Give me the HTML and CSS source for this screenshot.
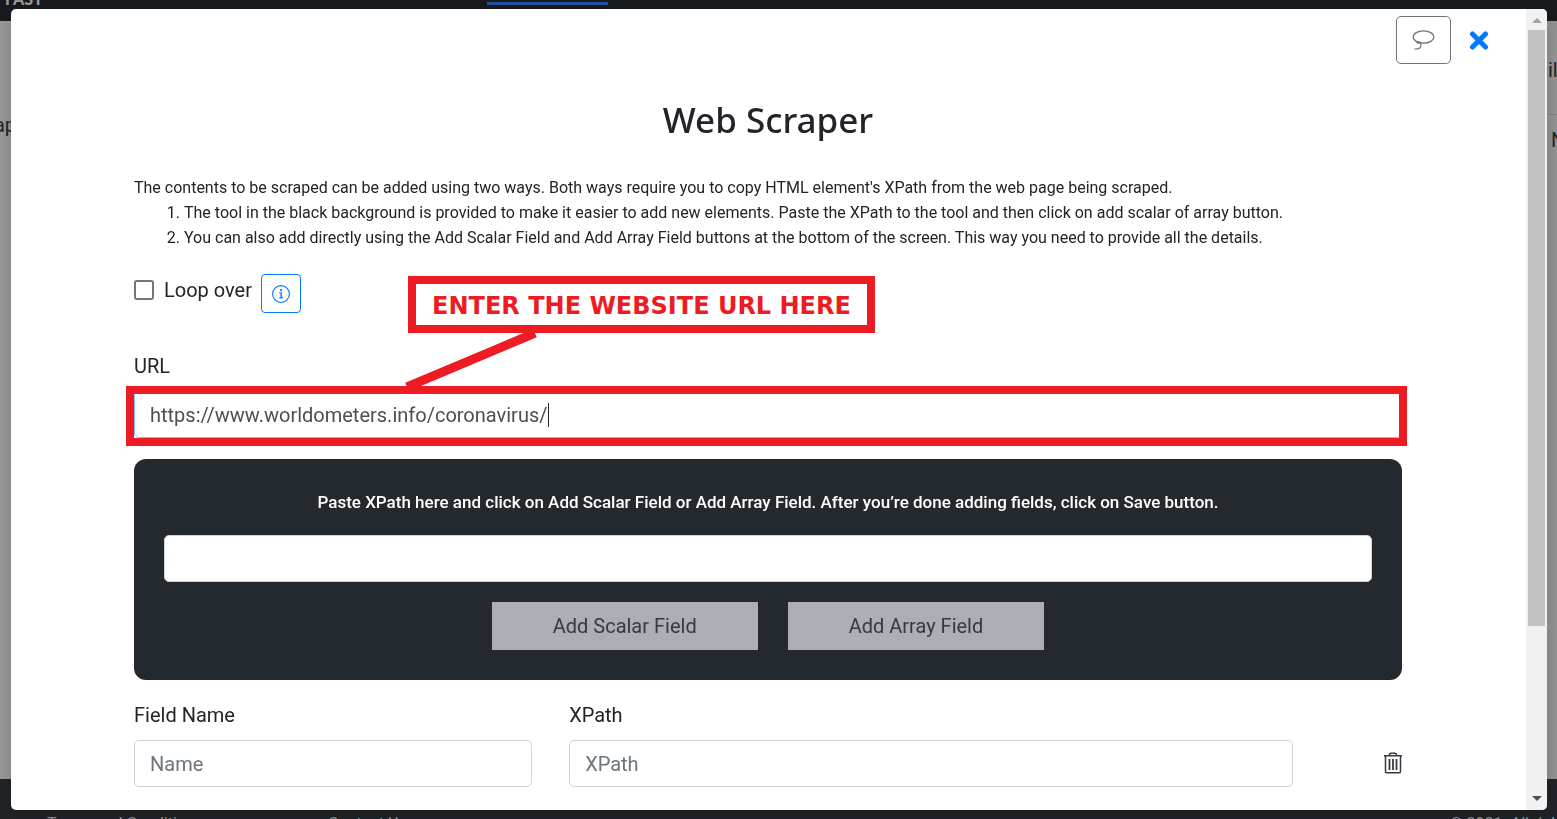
FILE: index.html
```html
<!DOCTYPE html>
<html lang="en">

<head>
    <meta charset="UTF-8">
    <meta name="viewport" content="width=device-width, initial-scale=1.0">
    <title>Web Scraper</title>

    <link rel="stylesheet" href="styles.css">
</head>

<body>
    <!-- page behind the modal -->
    <div class="page">
        <div class="page-header">
            <span class="brand">FAST</span>
            <span class="active-tab"></span>
        </div>
        <div class="page-main">
            <div class="page-left">ap</div>
            <div class="page-right">
                <div class="page-cell">il</div>
                <div class="page-cell">N</div>
            </div>
        </div>
        <div class="page-footer">
            <span class="terms">Terms and Conditions</span>
            <span class="contact">Contact Us</span>
            <span class="copyright">© 2021. All rights</span>
        </div>
    </div>

    <div class="overlay">
        <div class="modal">
            <div class="modal-content">
                <div class="toolbar">
                    <button type="button" class="btn-lasso" aria-label="Comments">
                        <svg width="26" height="24" viewBox="0 0 26 24" fill="none" stroke="#6c757d" stroke-width="1.2">
                            <ellipse cx="12.500" cy="9" rx="10.300" ry="6.200" />
                            <path d="M6.500 14.200c1.500-.9 3.300-.2 3.500 1.800.4 3.700-1.500 5.200-6.800 5M5.500 14c.7 1.300 2.300 1.400 3.800.5" />
                        </svg>
                    </button>
                    <button type="button" class="btn-close" aria-label="Close">
                        <svg width="20" height="20" viewBox="0 0 20 20" stroke="#007bff" stroke-width="5" stroke-linecap="round">
                            <path d="M3.500 4l13 13M16.500 4l-13 13" />
                        </svg>
                    </button>
                </div>

                <h1>Web Scraper</h1>

                <div class="help">
                    <p>The contents to be scraped can be added using two ways. Both ways require you to copy HTML element's XPath from the web page being scraped.</p>
                    <ol>
                        <li>The tool in the black background is provided to make it easier to add new elements. Paste the XPath to the tool and then click on add scalar of array button.</li>
                        <li>You can also add directly using the Add Scalar Field and Add Array Field buttons at the bottom of the screen. This way you need to provide all the details.</li>
                    </ol>
                </div>

                <div class="loop-row">
                    <input id="loop" type="checkbox">
                    <label for="loop">Loop over</label>
                    <button type="button" class="btn-info" aria-label="Info">
                        <svg width="18" height="18" viewBox="0 0 16 16" fill="#007bff">
                            <path d="M8 15A7 7 0 1 1 8 1a7 7 0 0 1 0 14zm0 1A8 8 0 1 0 8 0a8 8 0 0 0 0 16z" />
                            <path d="M6.300 6.500h2.500v4.700h1.200v.8H6.200v-.8h1.300V7.300H6.300z" />
                            <circle cx="8" cy="4.500" r="1" />
                        </svg>
                    </button>
                </div>

                <div class="url-field">
                    <label for="url">URL</label>
                    <input id="url" class="form-control focused" type="text" value="https://www.worldometers.info/coronavirus/">
                    <span class="caret"></span>
                    <div class="highlight"></div>
                    <svg class="pointer" width="136" height="60" viewBox="0 0 136 60">
                        <path d="M3 57L131 3" stroke="#ed1c24" stroke-width="9" />
                    </svg>
                    <div class="callout">ENTER THE WEBSITE URL HERE</div>
                </div>

                <div class="xpath-tool">
                    <label for="paste">Paste XPath here and click on Add Scalar Field or Add Array Field. After you’re done adding fields, click on Save button.</label>
                    <input id="paste" class="form-control" type="text">
                    <div class="tool-buttons">
                        <button type="button" class="btn-add">Add Scalar Field</button>
                        <button type="button" class="btn-add">Add Array Field</button>
                    </div>
                </div>

                <div class="field-row">
                    <div>
                        <label for="name">Field Name</label>
                        <input id="name" class="form-control" type="text" placeholder="Name">
                    </div>
                    <div>
                        <label for="xpath">XPath</label>
                        <input id="xpath" class="form-control" type="text" placeholder="XPath">
                    </div>
                    <button type="button" class="btn-trash" aria-label="Delete">
                        <svg width="20" height="24" viewBox="0 0 20 24" fill="none" stroke="#343a40" stroke-width="1.500">
                            <path d="M2 3.700h18M7.500 3.200c0-1.600.5-2 1.600-2h3.800c1.100 0 1.600.4 1.600 2M3.500 4v15.500c0 .9.500 1.300 1.300 1.300h12.400c.8 0 1.300-.4 1.300-1.300V4" />
                            <path d="M7.500 7v11M11 7v11M14.500 7v11" stroke-width="1.800" />
                        </svg>
                    </button>
                </div>
            </div>

            <div class="scrollbar">
                <span class="arrow-up"></span>
                <div class="track">
                    <div class="thumb"></div>
                </div>
                <span class="arrow-down"></span>
            </div>
        </div>
    </div>
</body>

</html>
```

FILE: styles.css
```css
* {
    box-sizing: border-box;
}

body {
    margin: 0;
    font-family: Roboto, "Liberation Sans", sans-serif;
    font-size: 20px;
    line-height: 30px;
    color: #212529;
}

h1,
p,
ol {
    margin: 0;
}

button {
    padding: 0;
    border: none;
    background: none;
    font: inherit;
    cursor: pointer;
}

svg {
    display: block;
}

/* page behind */
.page {
    height: 100vh;
    display: flex;
    flex-direction: column;
    overflow: hidden;
    background-color: #999;
}

.page-header {
    height: 21px;
    display: flex;
    align-items: flex-end;
    padding-bottom: 14px;
    background-color: #171b1e;
    overflow: hidden;
}

.brand {
    width: 482px;
    margin-left: 5px;
    font-family: Lato, sans-serif;
    font-size: 16px;
    line-height: 16px;
    font-weight: 900;
    color: #999;
}

.active-tab {
    width: 121px;
    height: 3px;
    margin-bottom: 2px;
    background-color: #2153a0;
}

.page-main {
    flex: 1;
    display: flex;
    justify-content: space-between;
    overflow: hidden;
}

.page-left {
    width: 16px;
    padding-top: 89px;
    display: flex;
    justify-content: flex-end;
}

.page-right {
    width: 10px;
    padding-top: 34px;
    background-color: #949494;
}

.page-cell {
    height: 60px;
    padding-left: 1px;
    border-bottom: 1px solid #828282;
}

.page-cell:last-child {
    padding-left: 4px;
    padding-top: 10px;
    border: none;
}

.page-footer {
    height: 40px;
    display: flex;
    padding: 37px 0 0 47px;
    font-size: 16px;
    line-height: 16px;
    background-color: #212529;
    color: #999;
    white-space: nowrap;
    overflow: hidden;
}

.terms {
    width: 281px;
}

.copyright {
    width: 107px;
    margin-left: auto;
}

/* modal */
.overlay {
    position: fixed;
    inset: 0;
    padding: 9px 10px 9px 11px;
}

.modal {
    height: 100%;
    display: flex;
    background-color: white;
    border-radius: 5px;
    overflow: hidden;
    box-shadow: 0 8px 16px rgba(0, 0, 0, .2);
}

.modal-content {
    flex: 1;
    min-width: 0;
    padding: 7px 124px 0 123px;
}

.toolbar {
    display: flex;
    justify-content: flex-end;
    align-items: center;
    gap: 18px;
    /* sits in the side padding of the modal */
    margin-right: -87px;
}

.btn-lasso {
    width: 55px;
    height: 48px;
    display: flex;
    align-items: center;
    justify-content: center;
    border: 1px solid #6c757d;
    border-radius: 5px;
}

h1 {
    margin-top: 32px;
    font-family: "Noto Sans", "Open Sans", sans-serif;
    font-size: 35px;
    line-height: 48px;
    font-weight: 500;
    text-align: center;
}

.help {
    margin-top: 31px;
    font-size: 16px;
    line-height: 25px;
}

.help ol {
    padding-left: 50px;
}

.loop-row {
    margin-top: 24px;
    display: flex;
    align-items: flex-start;
}

.loop-row input {
    appearance: none;
    width: 20px;
    height: 20px;
    margin: 6px 10px 0 0;
    border: 2px solid #767676;
    border-radius: 3px;
}

.loop-row label {
    margin: 1px 9px 0 0;
}

.btn-info {
    width: 40px;
    height: 39px;
    display: flex;
    align-items: center;
    justify-content: center;
    border: 1px solid #007bff;
    border-radius: 4px;
}

label {
    display: block;
}

.form-control {
    display: block;
    width: 100%;
    height: 47px;
    margin-top: 10px;
    padding: 0 15px;
    border: 1px solid #ced4da;
    border-radius: 5px;
    outline: none;
    font: inherit;
    color: #495057;
}

.form-control::placeholder {
    color: #6c757d;
}

.form-control.focused {
    border-color: #80bdff;
}

.url-field {
    position: relative;
    margin-top: 38px;
}

.caret {
    position: absolute;
    left: 414px;
    bottom: 11px;
    width: 1px;
    height: 24px;
    background-color: #212529;
}

.highlight {
    position: absolute;
    top: 35px;
    left: -8px;
    right: -5px;
    height: 60px;
    border: 8px solid #ed1c24;
}

.pointer {
    position: absolute;
    top: -21px;
    left: 270px;
}

.callout {
    position: absolute;
    top: -75px;
    left: 274px;
    width: 467px;
    height: 57px;
    border: 8px solid #ed1c24;
    background-color: white;
    color: #ed1c24;
    font-family: "DejaVu Sans", sans-serif;
    font-size: 24px;
    line-height: 44px;
    font-weight: bold;
    text-align: center;
    white-space: nowrap;
}

.xpath-tool {
    margin-top: 21px;
    padding: 30px;
    background-color: #24292d;
    border-radius: 12px;
}

.xpath-tool label {
    font-size: 17px;
    line-height: 26px;
    font-weight: 500;
    text-align: center;
    color: white;
}

.xpath-tool .form-control {
    margin-top: 20px;
}

.tool-buttons {
    margin-top: 20px;
    display: flex;
    justify-content: center;
    gap: 30px;
}

.btn-add {
    height: 48px;
    padding: 0 61px;
    background-color: #adaeb3;
    color: #343a40;
}

.field-row {
    margin-top: 20px;
    display: grid;
    grid-template-columns: 11fr 20fr 72px;
    gap: 37px;
    align-items: end;
}

.btn-trash {
    height: 47px;
    display: flex;
    align-items: center;
    justify-content: flex-end;
}

.scrollbar {
    width: 21px;
    padding: 0 2px;
    display: flex;
    flex-direction: column;
    align-items: center;
    background-color: #f1f1f1;
}

.track {
    flex: 1;
    width: 100%;
}

.thumb {
    height: 78.5%;
    background-color: #c1c1c1;
}

.arrow-up,
.arrow-down {
    margin: 9px 0 7px;
    border: 5px solid transparent;
    border-top-width: 0;
    border-bottom-color: #a3a3a3;
}

.arrow-down {
    margin: 7px 0 9px;
    border-width: 5px 5px 0;
    border-top-color: #505050;
}
```
